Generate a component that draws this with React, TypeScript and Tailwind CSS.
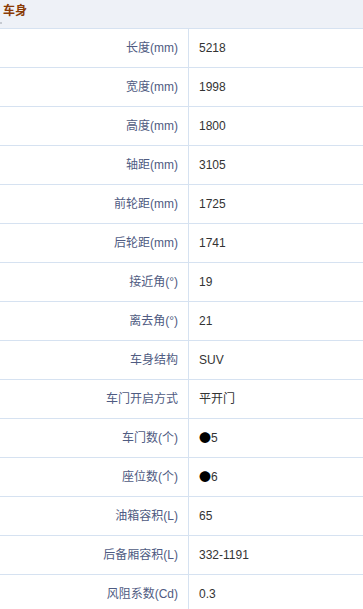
const rows: [string, string][] = [
  ['长度(mm)', '5218'],
  ['宽度(mm)', '1998'],
  ['高度(mm)', '1800'],
  ['轴距(mm)', '3105'],
  ['前轮距(mm)', '1725'],
  ['后轮距(mm)', '1741'],
  ['接近角(°)', '19'],
  ['离去角(°)', '21'],
  ['车身结构', 'SUV'],
  ['车门开启方式', '平开门'],
  ['车门数(个)', '●5'],
  ['座位数(个)', '●6'],
  ['油箱容积(L)', '65'],
  ['后备厢容积(L)', '332-1191'],
  ['风阻系数(Cd)', '0.3'],
]

function Value({ text }: { text: string }) {
  // standard-equipment dot is drawn wider, as in the CJK font
  if (text.startsWith('●')) {
    return (
      <>
        <span className="font-['Noto_Sans_CJK_SC',sans-serif] text-black">●</span>
        {text.slice(1)}
      </>
    )
  }
  return <>{text}</>
}

export default function App() {
  return (
    <div className="w-[363px] h-[609px] overflow-hidden bg-white font-['Liberation_Sans','Noto_Sans_CJK_SC',sans-serif] text-[12px]">
      {/* section header */}
      <div className="relative h-[29px] bg-[#eef1f7] border-b border-[#d6e2f1] px-[3px] pt-[2px]">
        <span className="font-bold text-[#8a3b06] leading-[16px]">车身</span>
        <span className="absolute left-0 top-[22px] w-[2px] h-[2px] rounded-full bg-[#b8bcc4]" />
      </div>

      {/* spec rows */}
      {rows.map(([label, value]) => (
        <div key={label} className="flex h-[39px] border-b border-[#d6e2f1]">
          <div className="w-[189px] shrink-0 border-r border-[#d6e2f1] flex items-center justify-end pr-[10px] text-[#4f5b82]">
            {label}
          </div>
          <div className="flex-1 flex items-center pl-[10px] text-[#333]">
            <Value text={value} />
          </div>
        </div>
      ))}
    </div>
  )
}
